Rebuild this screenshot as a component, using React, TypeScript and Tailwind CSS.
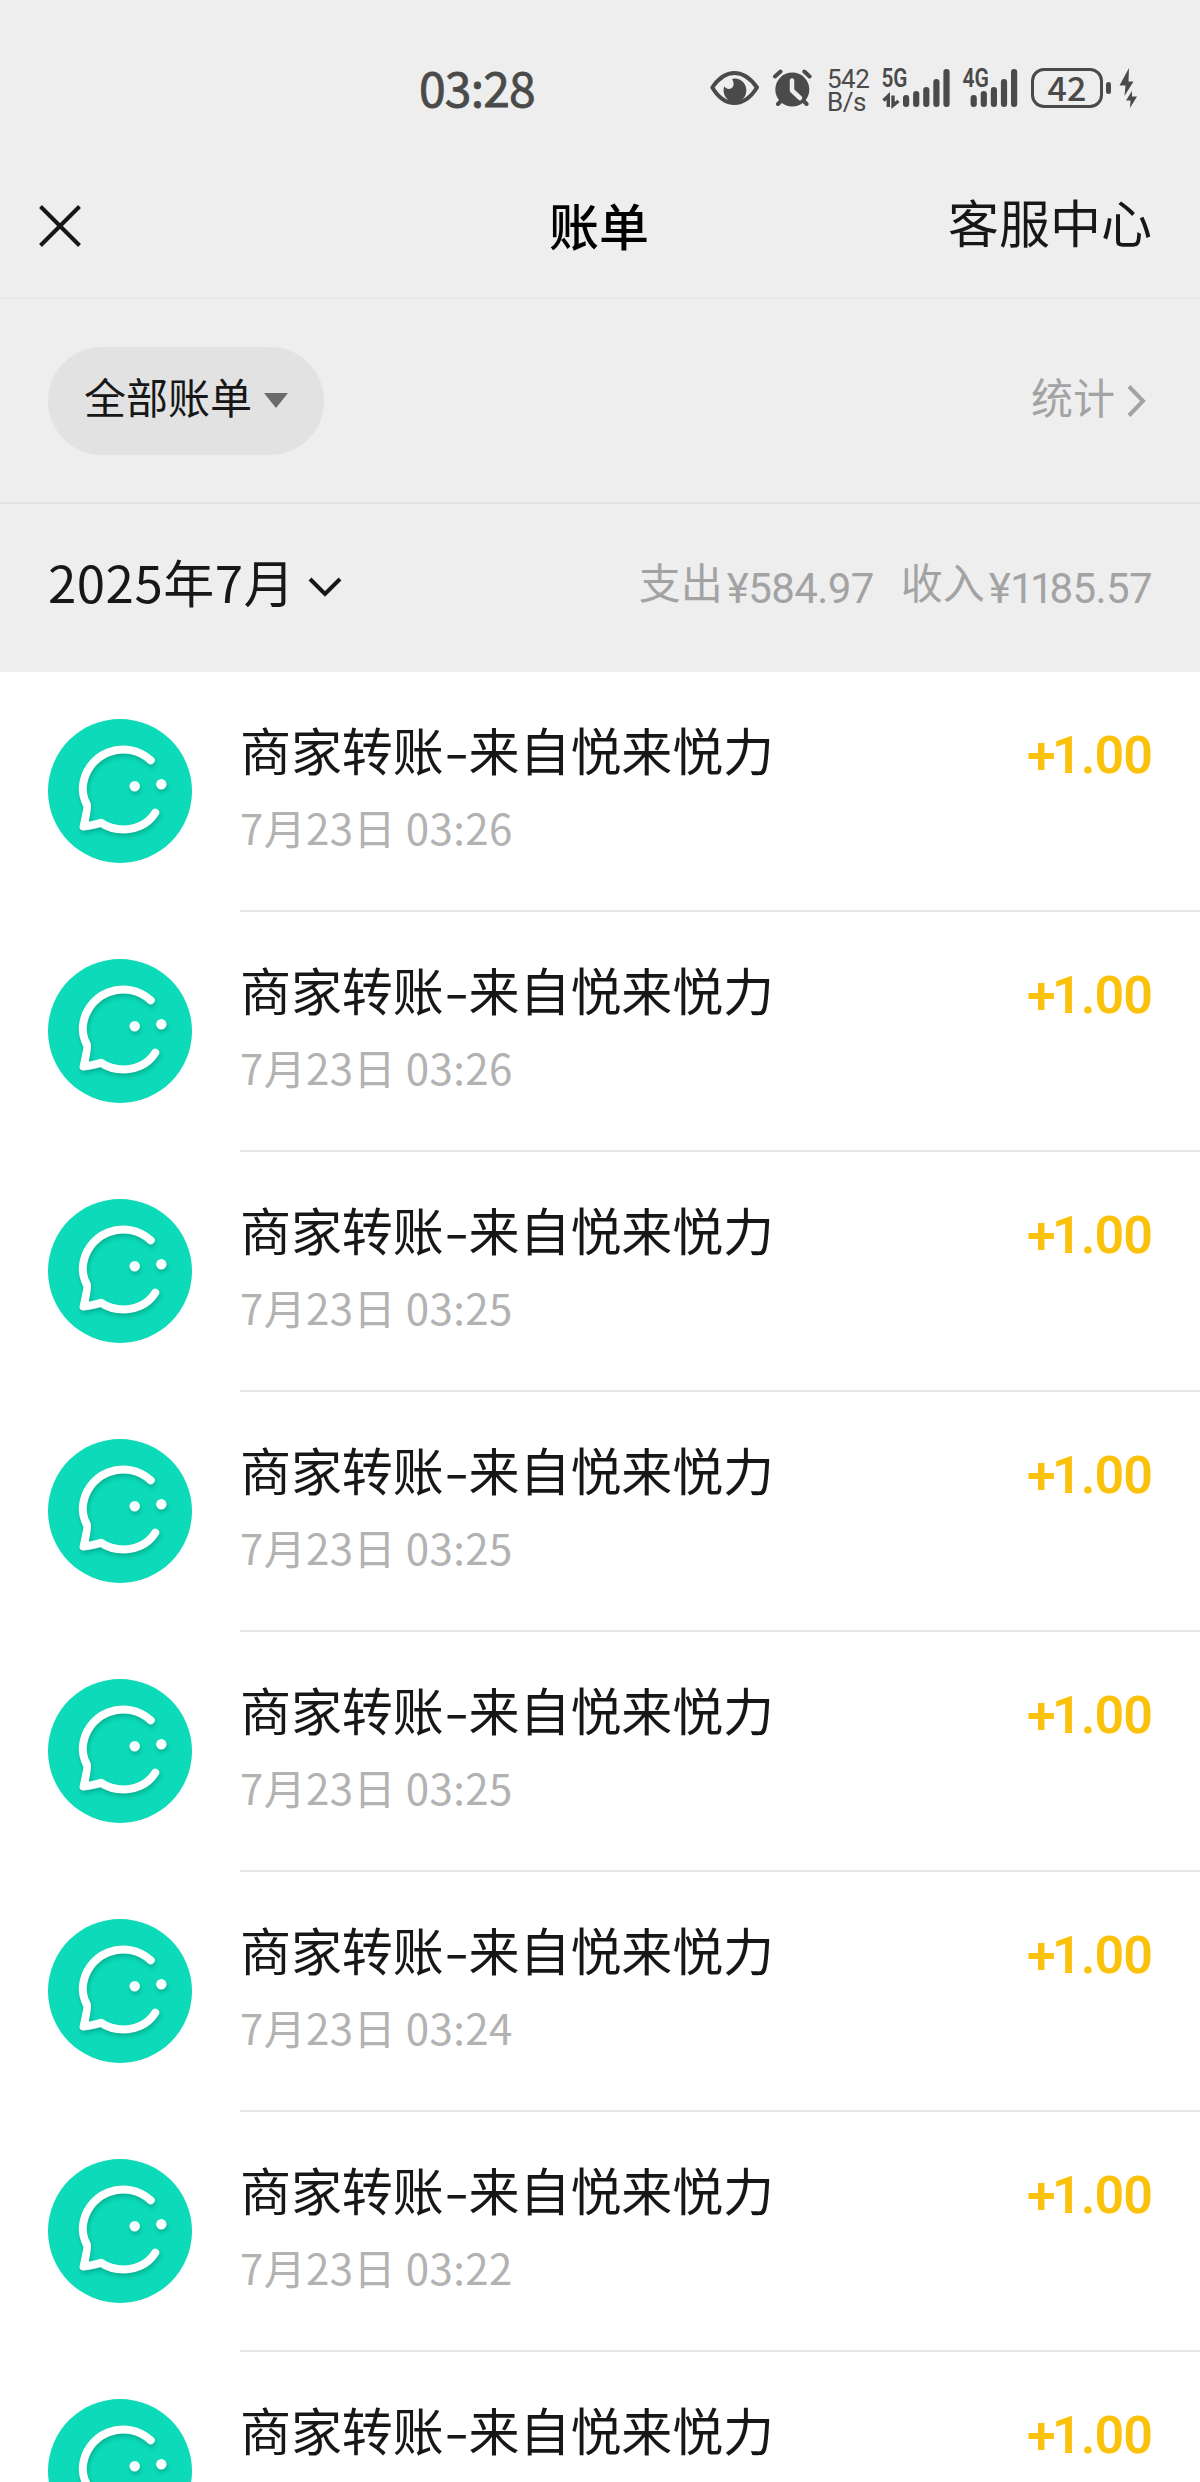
const bills = [
  { id: 1, time: "7月23日 03:26" },
  { id: 2, time: "7月23日 03:26" },
  { id: 3, time: "7月23日 03:25" },
  { id: 4, time: "7月23日 03:25" },
  { id: 5, time: "7月23日 03:25" },
  { id: 6, time: "7月23日 03:24" },
  { id: 7, time: "7月23日 03:22" },
  { id: 8, time: "7月23日 03:22" },
];

const EyeIcon = () => (
  <svg className="w-[50px] h-10 shrink-0" viewBox="0 0 50 40" fill="none">
    <path
      d="M2.3 19.5C8 11 16 5 24.5 5S41 11 47 19.5C41 29 33 35 24.5 35S8 29 2.3 19.5Z"
      stroke="#4a4a4a"
      strokeWidth="4"
      strokeLinejoin="round"
    />
    <path
      d="M22 11C24.5 15 24 19 21 20.5C18.5 21.5 16 20.5 14.3 18.2A11.4 11.8 0 1 0 22 11Z"
      fill="#4a4a4a"
    />
  </svg>
);

const AlarmIcon = () => (
  <svg
    className="w-10 h-10 ml-3 shrink-0"
    viewBox="0 0 40 40"
    fill="none"
    stroke="#4a4a4a"
    strokeWidth="4"
    strokeLinecap="round"
  >
    <circle cx="20.3" cy="21.5" r="17" fill="#4a4a4a" stroke="none" />
    <path d="M3 8.5L8.5 3.5M32.3 3.5L37.6 8.5M6 36L9 33M34.6 36L31.6 33" />
    <path d="M20 12.5V22.5L28 30" stroke="#eeeeee" strokeWidth="4.5" strokeLinejoin="round" />
  </svg>
);

// cellular signal, `x` is where the first bar starts
const Bars = ({ x }: { x: number }) => (
  <>
    {[27, 23, 19, 11, 1].map((top, i) => (
      <rect key={top} x={x + i * 10.1} y={top} width="6.2" height={39 - top} rx="3" fill="#4a4a4a" />
    ))}
  </>
);

const BillIcon = () => (
  <svg className="w-36 h-36 mt-[47px] shrink-0" viewBox="0 0 144 144" fill="none">
    <circle cx="72" cy="72" r="72" fill="#0cdab8" />
    <g className="drop-shadow-[1px_3px_2px_rgba(0,110,90,0.35)]">
      <path
        d="M102.7 41.3A40.5 40.5 0 0 0 34.7 69Q34.7 78 39 86Q40 88 35.6 107.6Q48 105.5 53 103.8Q62 110.4 76 110.4Q97 110 107.3 93.7"
        stroke="#fff"
        strokeWidth="8"
        strokeLinecap="round"
        strokeLinejoin="round"
      />
      <circle cx="86.7" cy="67.3" r="5.2" fill="#fff" />
      <circle cx="113.3" cy="65.3" r="5.2" fill="#fff" />
    </g>
  </svg>
);

const StatusBar = () => (
  <div className="flex items-start h-[180px] pt-[68px] pl-[419px] text-[#4a4a4a]">
    <span className="-mt-0.5 w-[291px] text-[48px] leading-[40px] tracking-[-0.8px] [-webkit-text-stroke:0.8px_#4a4a4a]">
      03:28
    </span>
    <EyeIcon />
    <AlarmIcon />
    <div className="ml-[15px] w-[53px] font-['Roboto',sans-serif] text-[26px] leading-[23px] tracking-[-0.5px]">
      <p>542</p>
      <p>B/s</p>
    </div>
    <svg className="w-[70px] h-10 shrink-0 overflow-visible" viewBox="0 0 70 40" fill="none">
      <text x="1.5" y="19" fontSize="25" fontWeight="600" fontFamily="Roboto" fill="#4a4a4a" textLength="26" lengthAdjust="spacingAndGlyphs">
        5G
      </text>
      <path d="M3.5 32.5L8.3 28V39M18.5 33L13 37.5V27.5" stroke="#4a4a4a" strokeWidth="3.4" />
      <Bars x={23} />
    </svg>
    <svg className="w-[56px] h-10 ml-3 shrink-0 overflow-visible" viewBox="0 0 56 40">
      <text x="0.5" y="19" fontSize="25" fontWeight="600" fontFamily="Roboto" fill="#4a4a4a" textLength="26.5" lengthAdjust="spacingAndGlyphs">
        4G
      </text>
      <Bars x={8.6} />
    </svg>
    <div className="ml-[13px] flex items-center">
      <div className="flex h-10 w-[72px] items-center justify-center rounded-[13px] border-[3px] border-[#4a4a4a] text-[34px] leading-none font-medium">
        <span className="-mt-0.5">42</span>
      </div>
      <div className="ml-[3px] h-[12px] w-[5px] rounded-full bg-[#4a4a4a]"></div>
    </div>
    <svg className="w-[18px] h-10 ml-2 shrink-0" viewBox="0 0 18 40" fill="#4a4a4a">
      <path d="M10 0L0.5 17.5H6.5L5.5 28L14.5 13.5H9.5Z" />
      <path d="M13 23L7 32.5H11.5L11 40L18 28.5H13Z" />
    </svg>
  </div>
);

const BillRow = ({ time }: { time: string }) => (
  <div className="flex h-[240px] pl-12">
    <BillIcon />
    <div className="ml-12 flex flex-1 justify-between border-b-2 border-[#e6e6e6] pr-12 pt-[43px]">
      <div>
        <p className="flex text-[51px] leading-[68px] text-[#171717] tracking-[-0.1px]">
          商家转账<span className="inline-block w-[25px] scale-x-[1.4] text-center">-</span>来自悦来悦力
        </p>
        <p className="mt-[14px] text-[42px] leading-[60px] tracking-[0.4px] text-[#b2b2b2]">{time}</p>
      </div>
      <span className="font-['Roboto',sans-serif] text-[52px] leading-[82px] font-semibold tracking-[-1px] text-[#fac20d]">
        <span className="tracking-[-3.5px]">+</span>1.00
      </span>
    </div>
  </div>
);

export default function App() {
  return (
    <div className="h-[2482px] w-[1200px] overflow-hidden bg-white font-['Noto_Sans_CJK_SC',sans-serif]">
      <div className="bg-[#eeeeee]">
        <StatusBar />

        <div className="flex h-[119px] items-start justify-between border-b-2 border-[#eaeaea] pl-[38px] pr-12 pt-[7px]">
          <svg className="mt-[17px] h-11 w-11" viewBox="0 0 44 44" stroke="#171717" strokeWidth="4">
            <path d="M2.5 2.5L41.5 41.5M41.5 2.5L2.5 41.5" />
          </svg>
          <h1 className="ml-[168px] text-[50px] leading-[74px] font-medium text-black">账单</h1>
          <span className="text-[51px] leading-[68px] text-[#171717]">客服中心</span>
        </div>

        <div className="flex h-[205px] items-center justify-between border-b-2 border-[#e2e2e2] pl-12 pr-[54px]">
          <button className="flex h-[108px] w-[276px] items-center rounded-full bg-[#e2e2e2] pl-9 text-[42px] leading-[60px] text-[#171717]">
            <span className="mb-2.5">全部账单</span>
            <svg className="ml-3 h-[15px] w-6" viewBox="0 0 24 15" fill="#6b6b6b">
              <path d="M0 0H24L12 15Z" />
            </svg>
          </button>
          <span className="flex items-center text-[42px] leading-[60px] text-[#a3a3a3]">
            <span className="mb-2.5">统计</span>
            <svg className="ml-3 h-8 w-[19px]" viewBox="0 0 19 32" fill="none" stroke="#a3a3a3" strokeWidth="4">
              <path d="M2 1.5L16 16L2 30.5" />
            </svg>
          </span>
        </div>

        <div className="flex h-[168px] items-center justify-between pl-12 pr-12">
          <span className="flex items-center text-[51px] leading-[68px] text-[#171717]">
            <span className="mb-3.5 tracking-[0.5px]">2025年7月</span>
            <svg className="ml-[13px] mb-[2px] h-5 w-[34px]" viewBox="0 0 34 20" fill="none" stroke="#171717" strokeWidth="4">
              <path d="M2 2L17 17L32 2" />
            </svg>
          </span>
          <span className="flex items-center text-[42px] leading-[60px] text-[#a3a3a3]">
            <span className="mb-3.5">支出</span>
            <span className="-mb-0.5 ml-[4px] font-['Roboto',sans-serif] tracking-[-0.6px]">¥584.97</span>
            <span className="mb-3.5 ml-[27px]">收入</span>
            <span className="-mb-0.5 ml-[4px] font-['Roboto',sans-serif] tracking-[-0.6px]">
              ¥<span className="tracking-[-4px]">11</span>85.57
            </span>
          </span>
        </div>
      </div>

      {bills.map((bill) => (
        <BillRow key={bill.id} time={bill.time} />
      ))}
    </div>
  );
}
